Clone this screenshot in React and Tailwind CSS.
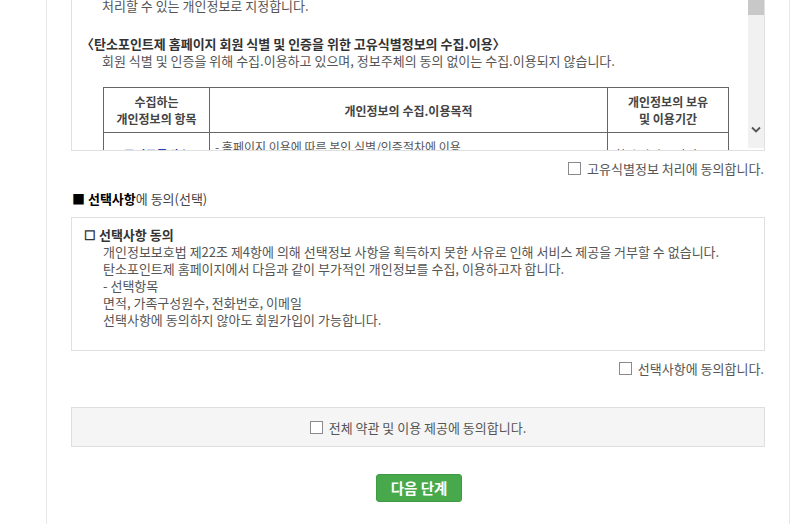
import React from "react";

function Box() {
  return <span className="inline-block w-[13px] h-[13px] border border-[#8a8a8a] bg-white shrink-0" />;
}

function AgreeLine({ label }) {
  return (
    <div className="flex justify-end items-center gap-[6px] h-[17px] pr-[1px]">
      <Box />
      <span>{label}</span>
    </div>
  );
}

function ScrollBar() {
  return (
    <div className="w-[16px] h-[148px] bg-[#f1f1f1] flex flex-col justify-between shrink-0">
      <div className="h-[15px] bg-[#c8c8c8]" />
      <div className="flex justify-center pb-[15px]">
        <svg width="10" height="7" viewBox="0 0 10 7">
          <path d="M1 1.5 L5 5.5 L9 1.5" fill="none" stroke="#555" strokeWidth="1.8" />
        </svg>
      </div>
    </div>
  );
}

export default function App() {
  const optLines = [
    "개인정보보호법 제22조 제4항에 의해 선택정보 사항을 획득하지 못한 사유로 인해 서비스 제공을 거부할 수 없습니다.",
    "탄소포인트제 홈페이지에서 다음과 같이 부가적인 개인정보를 수집, 이용하고자 합니다.",
    "- 선택항목",
    "면적, 가족구성원수, 전화번호, 이메일",
    "선택사항에 동의하지 않아도 회원가입이 가능합니다.",
  ];

  return (
    <div className="bg-white min-h-[524px] font-['Noto_Sans_CJK_KR','Noto_Sans',sans-serif] text-[13px] leading-[17px] text-[#555]">
      <div className="ml-[46px] w-[744px] min-h-[524px] border-x border-[#e8e8e8] px-[24px]">
        {/* scrolling terms box */}
        <div className="h-[151px] overflow-hidden border-x border-b border-[#e0e0e0] flex">
          <div className="flex-1 overflow-hidden">
            <div className="mt-[-20px]">
              <p className="pl-[30px] whitespace-nowrap">
                고유식별정보 및 개인정보 보호법 시행령에 따라 고유식별정보를 처리할 수 있도록 한 경우에 해당하는
              </p>
              <p className="pl-[30px]">처리할 수 있는 개인정보로 지정합니다.</p>
              <p className="pl-[9px] mt-[21px] font-bold text-[#333]">
                〈탄소포인트제 홈페이지 회원 식별 및 인증을 위한 고유식별정보의 수집.이용〉
              </p>
              <p className="pl-[30px]">
                회원 식별 및 인증을 위해 수집.이용하고 있으며, 정보주체의 동의 없이는 수집.이용되지 않습니다.
              </p>
              <table className="ml-[31px] mt-[18px] w-[626px] border-collapse border border-[#666] text-[12px] text-[#555]">
                <thead>
                  <tr className="h-[45px]">
                    <th className="w-[106px] border border-[#666] font-bold text-[#444] text-center">
                      수집하는
                      <br />
                      개인정보의 항목
                    </th>
                    <th className="w-[398px] border border-[#666] font-bold text-[#444] text-center">
                      개인정보의 수집.이용목적
                    </th>
                    <th className="border border-[#666] font-bold text-[#444] text-center">
                      개인정보의 보유
                      <br />
                      및 이용기간
                    </th>
                  </tr>
                </thead>
                <tbody>
                  <tr>
                    <td className="border border-[#666] text-center align-top text-[#2b3fb8] font-bold pt-[13px]">
                      주민등록번호
                    </td>
                    <td className="border border-[#666] px-[5px] pt-[5px]">
                      - 홈페이지 이용에 따른 본인 식별/인증절차에 이용
                      <br />
                      - 회원가입 시 중복가입 확인
                    </td>
                    <td className="border border-[#666] text-center align-top pt-[13px]">회원 탈퇴 시까지 보유</td>
                  </tr>
                </tbody>
              </table>
            </div>
          </div>
          <ScrollBar />
        </div>

        <div className="mt-[9px]">
          <AgreeLine label="고유식별정보 처리에 동의합니다." />
        </div>

        <p className="mt-[13px] pl-[1px] text-[#444]">
          <span className="text-black">■ </span>
          <span className="font-bold text-black">선택사항</span>에 동의(선택)
        </p>

        <div className="mt-[10px] h-[134px] border border-[#e0e0e0] pt-[8px] pl-[12px]">
          <p className="font-bold text-[#333]">☐ 선택사항 동의</p>
          {optLines.map((t, i) => (
            <p key={i} className="pl-[19px]">
              {t}
            </p>
          ))}
        </div>

        <div className="mt-[9px]">
          <AgreeLine label="선택사항에 동의합니다." />
        </div>

        <div className="mt-[30px] h-[40px] bg-[#f5f5f5] border border-[#dedede] flex items-center justify-center gap-[6px]">
          <Box />
          <span>전체 약관 및 이용 제공에 동의합니다.</span>
        </div>

        <div className="mt-[27px] flex justify-center">
          <button className="w-[86px] h-[28px] rounded-[3px] bg-[#47a94b] border border-[#3f9a43] text-white font-bold text-[14.5px] leading-[20px] ml-[2px]">
            다음 단계
          </button>
        </div>
      </div>
    </div>
  );
}
